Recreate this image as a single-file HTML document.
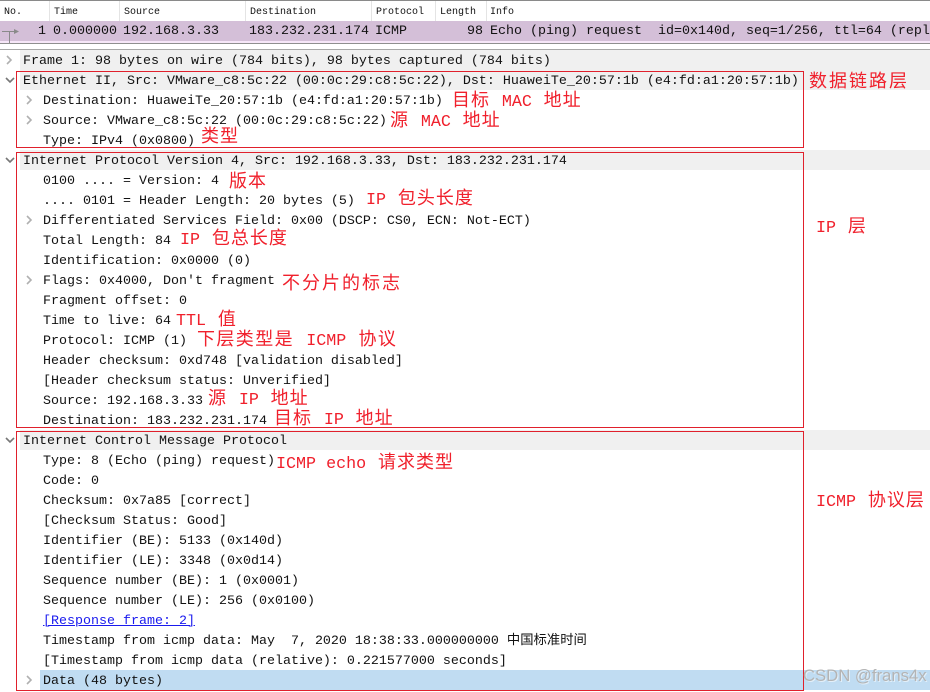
<!DOCTYPE html>
<html><head><meta charset="utf-8"><style>
html,body{margin:0;padding:0;background:#fff}
#p{position:relative;width:930px;height:692px;overflow:hidden;background:#fff;font-family:"Liberation Mono","Noto Sans CJK SC",monospace;font-size:13.33px;color:#111}
#p>*{position:absolute}
.h{font-size:10px;top:6px;line-height:13px;white-space:pre;color:#111}
.c{top:22px;line-height:20px;white-space:pre;color:#111}
.sep{top:1px;width:1px;height:20px;background:#e4e4e4}
.r{left:43px;line-height:20px;height:20px;white-space:pre;margin-top:2px}
.t{left:23px}
.g{left:20px;width:910px;height:20px;background:#f0f0f0}
.b{border:1px solid #e0202c;box-sizing:border-box;left:16px;width:788px}
.a{color:#f0202c;font-size:18px;line-height:24px;letter-spacing:1px;white-space:pre}
.a i{font-style:normal;font-size:16.7px;letter-spacing:0}
svg{overflow:visible}
</style></head><body><div id="p">
<div style="left:0;top:0;width:930px;height:1px;background:#8a8a8a"></div>
<div class="sep" style="left:49px"></div><div class="sep" style="left:119px"></div><div class="sep" style="left:245px"></div><div class="sep" style="left:371px"></div><div class="sep" style="left:435px"></div><div class="sep" style="left:486px"></div>
<span class="h" style="left:4px">No.</span><span class="h" style="left:54px">Time</span><span class="h" style="left:124px">Source</span><span class="h" style="left:250px">Destination</span><span class="h" style="left:376px">Protocol</span><span class="h" style="left:440px">Length</span><span class="h" style="left:490px">Info</span>
<div style="left:0;top:21px;width:930px;height:20px;background:#d4bfd8"></div>
<div style="left:0;top:41px;width:930px;height:2px;background:#f6e6f8"></div>
<div style="left:0;top:43px;width:930px;height:1px;background:#8f8f8f"></div>
<div style="left:0;top:49px;width:930px;height:1px;background:#a8a8a8"></div>
<svg style="left:0;top:0" width="30" height="44"><path d="M2 31.5H14M9.500 31.500V43" stroke="#8a8a8a" fill="none"/><path d="M14 29L19 31.500L14 34Z" fill="#8a8a8a"/></svg>
<span class="c" style="left:38px">1</span><span class="c" style="left:53px">0.000000</span><span class="c" style="left:123px">192.168.3.33</span><span class="c" style="left:249px">183.232.231.174</span><span class="c" style="left:375px">ICMP</span><span class="c" style="left:467px">98</span><span class="c" style="left:490px">Echo (ping) request  id=0x140d, seq=1/256, ttl=64 (repl</span>

<div class="g" style="top:50px"></div><div class="g" style="top:70px"></div><div class="g" style="top:150px"></div><div class="g" style="top:430px"></div>
<div style="left:40px;top:670px;width:890px;height:20px;background:#c0dcf2"></div>

<span class="r t" style="top:50px">Frame 1: 98 bytes on wire (784 bits), 98 bytes captured (784 bits)</span>
<span class="r t" style="top:70px">Ethernet II, Src: VMware_c8:5c:22 (00:0c:29:c8:5c:22), Dst: HuaweiTe_20:57:1b (e4:fd:a1:20:57:1b)</span>
<span class="r" style="top:90px">Destination: HuaweiTe_20:57:1b (e4:fd:a1:20:57:1b)</span>
<span class="r" style="top:110px">Source: VMware_c8:5c:22 (00:0c:29:c8:5c:22)</span>
<span class="r" style="top:130px">Type: IPv4 (0x0800)</span>
<span class="r t" style="top:150px">Internet Protocol Version 4, Src: 192.168.3.33, Dst: 183.232.231.174</span>
<span class="r" style="top:170px">0100 .... = Version: 4</span>
<span class="r" style="top:190px">.... 0101 = Header Length: 20 bytes (5)</span>
<span class="r" style="top:210px">Differentiated Services Field: 0x00 (DSCP: CS0, ECN: Not-ECT)</span>
<span class="r" style="top:230px">Total Length: 84</span>
<span class="r" style="top:250px">Identification: 0x0000 (0)</span>
<span class="r" style="top:270px">Flags: 0x4000, Don't fragment</span>
<span class="r" style="top:290px">Fragment offset: 0</span>
<span class="r" style="top:310px">Time to live: 64</span>
<span class="r" style="top:330px">Protocol: ICMP (1)</span>
<span class="r" style="top:350px">Header checksum: 0xd748 [validation disabled]</span>
<span class="r" style="top:370px">[Header checksum status: Unverified]</span>
<span class="r" style="top:390px">Source: 192.168.3.33</span>
<span class="r" style="top:410px">Destination: 183.232.231.174</span>
<span class="r t" style="top:430px">Internet Control Message Protocol</span>
<span class="r" style="top:450px">Type: 8 (Echo (ping) request)</span>
<span class="r" style="top:470px">Code: 0</span>
<span class="r" style="top:490px">Checksum: 0x7a85 [correct]</span>
<span class="r" style="top:510px">[Checksum Status: Good]</span>
<span class="r" style="top:530px">Identifier (BE): 5133 (0x140d)</span>
<span class="r" style="top:550px">Identifier (LE): 3348 (0x0d14)</span>
<span class="r" style="top:570px">Sequence number (BE): 1 (0x0001)</span>
<span class="r" style="top:590px">Sequence number (LE): 256 (0x0100)</span>
<span class="r" style="top:610px;color:#1a1aee;text-decoration:underline">[Response frame: 2]</span>
<span class="r" style="top:630px">Timestamp from icmp data: May  7, 2020 18:38:33.000000000 中国标准时间</span>
<span class="r" style="top:650px">[Timestamp from icmp data (relative): 0.221577000 seconds]</span>
<span class="r" style="top:670px">Data (48 bytes)</span>

<svg style="left:0;top:0" width="40" height="692" fill="none" stroke-width="1.6">
<g stroke="#b0b0b0"><path d="M7 56l4 4-4 4"/><path d="M27 96l4 4-4 4"/><path d="M27 116l4 4-4 4"/><path d="M27 216l4 4-4 4"/><path d="M27 276l4 4-4 4"/><path d="M27 676l4 4-4 4"/></g>
<g stroke="#777"><path d="M6 78l4 4 4-4"/><path d="M6 158l4 4 4-4"/><path d="M6 438l4 4 4-4"/></g>
</svg>

<div class="b" style="top:71px;height:77px"></div>
<div class="b" style="top:152px;height:276px"></div>
<div class="b" style="top:431px;height:260px"></div>

<span class="a" style="left:809px;top:71px;letter-spacing:2px">数据链路层</span>
<span class="a" style="left:452px;top:90px">目标 <i>MAC</i> 地址</span>
<span class="a" style="left:390px;top:110px">源 <i>MAC</i> 地址</span>
<span class="a" style="left:201px;top:126px">类型</span>
<span class="a" style="left:229px;top:171px">版本</span>
<span class="a" style="left:366px;top:188px"><i>IP</i> 包头长度</span>
<span class="a" style="left:180px;top:228px"><i>IP</i> 包总长度</span>
<span class="a" style="left:282px;top:273px;letter-spacing:2px">不分片的标志</span>
<span class="a" style="left:176px;top:309px"><i>TTL</i> 值</span>
<span class="a" style="left:197px;top:329px;letter-spacing:1.4px">下层类型是 <i>ICMP</i> 协议</span>
<span class="a" style="left:208px;top:388px">源 <i>IP</i> 地址</span>
<span class="a" style="left:274px;top:408px">目标 <i>IP</i> 地址</span>
<span class="a" style="left:276px;top:452px"><i>ICMP echo</i> 请求类型</span>
<span class="a" style="left:816px;top:216px"><i>IP</i> 层</span>
<span class="a" style="left:816px;top:490px"><i>ICMP</i> 协议层</span>

<span style="left:803px;top:666px;font-family:'Liberation Sans',sans-serif;font-size:16.7px;line-height:20px;color:#b4b4b4;text-shadow:1px 1px 0 rgba(255,255,255,.55);white-space:pre">CSDN @frans4x</span>
</div></body></html>
